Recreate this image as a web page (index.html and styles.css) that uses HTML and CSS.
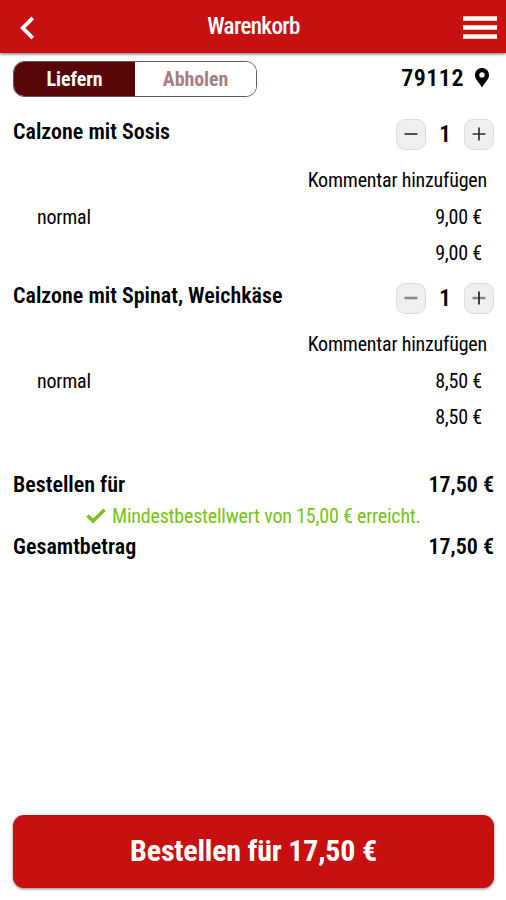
FILE: index.html
```html
<!DOCTYPE html>
<html lang="de">
<head>
    <meta charset="UTF-8">
    <meta name="viewport" content="width=device-width, initial-scale=1.0">
    <title>Warenkorb</title>
    <link rel="stylesheet" href="styles.css">
</head>
<body>
    <header>
        <button class="icon-button" aria-label="Zurück">
            <svg width="15" height="24" viewBox="0 0 15 24"><path d="M12.8 1.8 2.8 12l10 10.2" fill="none" stroke="#fff" stroke-width="3.8"/></svg>
        </button>
        <h1>Warenkorb</h1>
        <button class="icon-button" aria-label="Menü">
            <svg width="34" height="24" viewBox="0 0 34 24"><path d="M0 2.5h34M0 11.5h34M0 20.5h34" stroke="#fff" stroke-width="4.6"/></svg>
        </button>
    </header>

    <main>
        <!-- Liefern / Abholen und Postleitzahl -->
        <div class="delivery">
            <div class="switch">
                <button class="active">Liefern</button>
                <button>Abholen</button>
            </div>
            <div class="zip">
                <span>79112</span>
                <svg width="14" height="20" viewBox="0 0 14 20"><path d="M7 0C3 0 0 3 0 7c0 4.600 4.200 7.300 7 12.600 2.800-5.300 7-8 7-12.600 0-4-3-7-7-7zm0 9.600a2.700 2.700 0 1 1 0-5.400 2.700 2.700 0 0 1 0 5.400z" fill="#000"/></svg>
            </div>
        </div>

        <!-- Artikel -->
        <div class="item">
            <div class="item-head">
                <h2>Calzone mit Sosis</h2>
                <div class="amount">
                    <button aria-label="Weniger"><svg width="14" height="14" viewBox="0 0 14 14"><path d="M.5 7h13" stroke="#333" stroke-width="1.700"/></svg></button>
                    <b>1</b>
                    <button aria-label="Mehr"><svg width="14" height="14" viewBox="0 0 14 14"><path d="M.5 7h13M7 .5v13" stroke="#333" stroke-width="1.700"/></svg></button>
                </div>
            </div>
            <p class="comment">Kommentar hinzufügen</p>
            <div class="row"><span>normal</span><span>9,00 €</span></div>
            <div class="row sum"><span>9,00 €</span></div>
        </div>

        <div class="item">
            <div class="item-head">
                <h2>Calzone mit Spinat, Weichkäse</h2>
                <div class="amount">
                    <button aria-label="Weniger"><svg width="14" height="14" viewBox="0 0 14 14"><path d="M.5 7h13" stroke="#888" stroke-width="2.600"/></svg></button>
                    <b>1</b>
                    <button aria-label="Mehr"><svg width="14" height="14" viewBox="0 0 14 14"><path d="M.5 7h13" stroke="#888" stroke-width="2.400"/><path d="M7 .5v13" stroke="#222" stroke-width="1.700"/></svg></button>
                </div>
            </div>
            <p class="comment">Kommentar hinzufügen</p>
            <div class="row"><span>normal</span><span>8,50 €</span></div>
            <div class="row sum"><span>8,50 €</span></div>
        </div>

        <!-- Summe -->
        <div class="totals">
            <div class="total"><span>Bestellen für</span><span>17,50 €</span></div>
            <p class="minimum">
                <svg width="20" height="16" viewBox="0 0 20 16"><path d="M1.500 7.500 7 13 18.500 1.700" fill="none" stroke="#76c413" stroke-width="3.400"/></svg>
                <span>Mindestbestellwert von 15,00 € erreicht.</span>
            </p>
            <div class="total"><span>Gesamtbetrag</span><span>17,50 €</span></div>
        </div>
    </main>

    <footer>
        <button class="order">Bestellen für 17,50 €</button>
    </footer>
</body>
</html>
```
FILE: styles.css
```css
* {
    box-sizing: border-box;
}
body {
    font-family: "Roboto Condensed", Roboto, sans-serif;
    font-stretch: 75%;
    font-size: 20px;
    letter-spacing: -0.2px;
    margin: 0;
    height: 900px;
    display: flex;
    flex-direction: column;
    background-color: #fff;
    color: #000;
    white-space: nowrap;
}
button {
    font: inherit;
    letter-spacing: inherit;
    padding: 0;
    border: none;
    cursor: pointer;
}
svg {
    display: block;
}
h1, h2, p {
    margin: 0;
}
header {
    height: 53px;
    padding: 2px 9px 0 20px;
    display: grid;
    grid-template-columns: 1fr auto 1fr;
    align-items: center;
    background-color: #c91011;
    color: #fff;
    box-shadow: 0 1px 3px rgba(0, 0, 0, 0.6);
}
header h1 {
    margin: 0 10px 2px 0;
    font-size: 23px;
    font-weight: 500;
    letter-spacing: -0.6px;
}
.icon-button {
    background: none;
    justify-self: start;
}
.icon-button:last-child {
    justify-self: end;
}
main {
    padding: 8px 12px 0 13px;
    flex: 1;
}
.delivery {
    display: flex;
    justify-content: space-between;
    height: 36px;
}
.switch {
    display: flex;
    width: 244px;
    border: 1px solid #6b5558;
    border-radius: 11px;
    overflow: hidden;
}
.switch button {
    flex: 1;
    background-color: #fff;
    color: #a87f82;
    font-weight: 700;
    letter-spacing: -0.1px;
}
.switch .active {
    background-color: #570507;
    color: #fff;
}
.zip {
    display: flex;
    align-items: center;
    gap: 11px;
    padding: 0 5px 2px 0;
    font-size: 24px;
    font-weight: 600;
    letter-spacing: 0.5px;
}
.item {
    height: 164px;
    padding-top: 22px;
}
.item-head {
    display: flex;
    justify-content: space-between;
    height: 30px;
}
.item-head h2 {
    font-size: 22px;
    font-weight: 600;
    letter-spacing: 0;
    line-height: 26px;
}
.amount {
    display: flex;
    align-items: center;
    gap: 12px;
}
.amount b {
    width: 14px;
    font-size: 23px;
    font-weight: 600;
    text-align: center;
}
.amount button {
    display: flex;
    align-items: center;
    justify-content: center;
    width: 30px;
    height: 31px;
    background-color: #efefef;
    border: 1px solid #ddd;
    border-radius: 9px;
}
.comment {
    margin-top: 13px;
    padding-right: 7px;
    line-height: 36px;
    text-align: right;
}
.row {
    display: flex;
    justify-content: space-between;
    padding: 0 12px 0 24px;
    line-height: 36px;
}
.comment + .row {
    margin-top: 1px;
}
.sum {
    justify-content: flex-end;
}
.totals {
    padding-top: 44px;
}
.total {
    display: flex;
    justify-content: space-between;
    font-size: 22px;
    font-weight: 600;
    letter-spacing: 0;
    line-height: 32px;
}
.minimum {
    display: flex;
    align-items: center;
    gap: 6px;
    padding-left: 73px;
    color: #76c413;
    line-height: 30px;
}
footer {
    padding: 0 12px 12px 13px;
}
.order {
    width: 100%;
    height: 73px;
    padding-bottom: 2px;
    background-color: #c91011;
    color: #fff;
    font-size: 30px;
    font-weight: 700;
    letter-spacing: -0.2px;
    border-radius: 11px;
    box-shadow: 0 1px 3px rgba(0, 0, 0, 0.5);
}
```
